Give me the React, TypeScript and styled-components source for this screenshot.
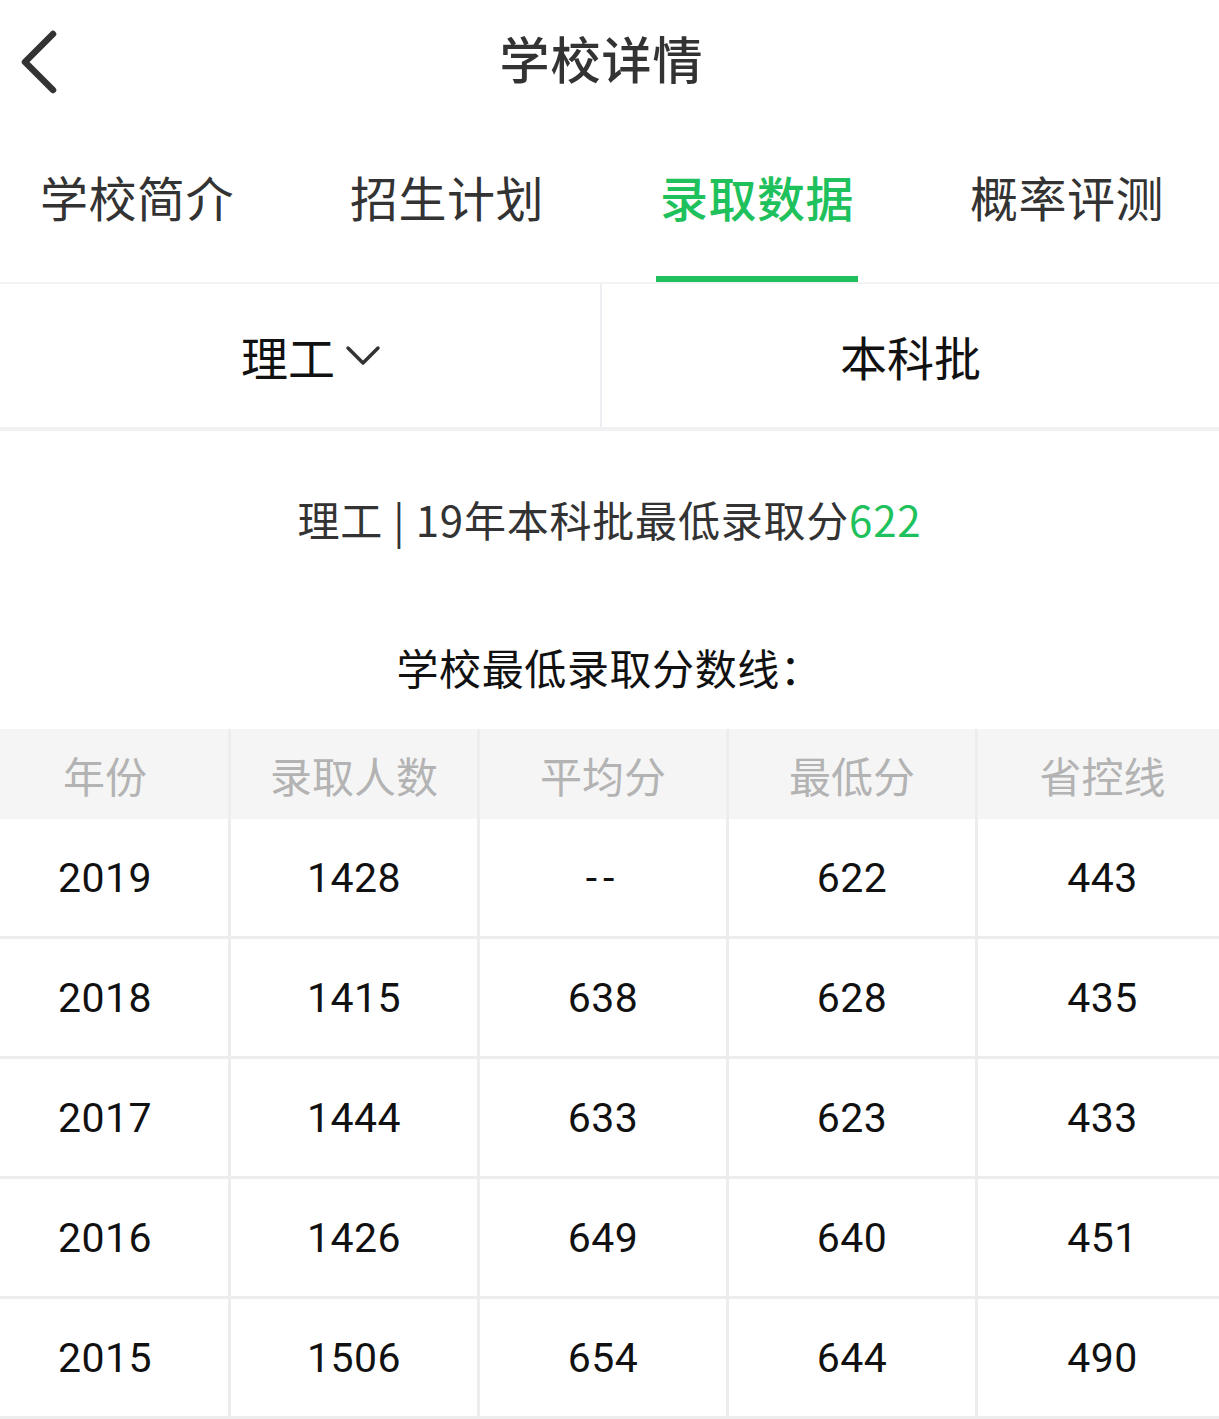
import React from "react";
import styled, { createGlobalStyle } from "styled-components";

const GREEN = "#1ec15c";
const LINE = "#ededed";

const GlobalStyle = createGlobalStyle`
  html, body {
    margin: 0;
    padding: 0;
    background: #ffffff;
    font-family: "Noto Sans CJK SC", "Noto Sans", sans-serif;
    overflow-x: hidden;
  }
`;

const Page = styled.div`
  width: 1219px;
  overflow: hidden;
`;

const Header = styled.header`
  position: relative;
  height: 120px;
  display: flex;
  align-items: center;
  justify-content: center;
  padding-right: 16px;
  box-sizing: border-box;
`;

const BackButton = styled.button`
  position: absolute;
  left: 14px;
  top: 26px;
  width: 50px;
  height: 70px;
  border: 0;
  padding: 0;
  background: none;
  display: flex;
  align-items: center;
  justify-content: center;
`;

const Title = styled.h1`
  margin: 0 0 6px;
  font-size: 50px;
  font-weight: 500;
  color: #333;
  letter-spacing: 1px;
`;

const TabBar = styled.nav`
  height: 162px;
  border-bottom: 2px solid #f2f2f4;
  overflow: hidden;
`;

const TabTrack = styled.div`
  display: grid;
  grid-template-columns: repeat(4, 310px);
  margin-left: -18px;
  height: 100%;
`;

const Tab = styled.div<{ $active?: boolean }>`
  display: flex;
  align-items: center;
  justify-content: center;
  font-size: 48px;
  letter-spacing: 0.5px;
  color: ${(p) => (p.$active ? GREEN : "#333")};
  font-weight: ${(p) => (p.$active ? 500 : 400)};
`;

const TabLabel = styled.span<{ $active?: boolean }>`
  position: relative;
  height: 162px;
  display: flex;
  align-items: center;
  padding-bottom: 10px;
  box-sizing: border-box;
  &::after {
    content: "";
    display: ${(p) => (p.$active ? "block" : "none")};
    position: absolute;
    left: -4px;
    right: -4px;
    bottom: 0;
    height: 6px;
    background: ${GREEN};
  }
`;

const FilterRow = styled.div`
  height: 143px;
  display: grid;
  grid-template-columns: 602px 1fr;
  border-bottom: 4px solid #f1f1f4;
`;

const FilterCell = styled.div<{ $divider?: boolean; $shift?: number }>`
  display: flex;
  align-items: center;
  justify-content: center;
  gap: 10px;
  font-size: 47px;
  color: #111;
  padding-left: ${(p) => p.$shift ?? 0}px;
  border-right: ${(p) => (p.$divider ? "2px solid #eeeef2" : "none")};
`;

const Summary = styled.p`
  margin: 58px 0 0;
  line-height: 60px;
  text-align: center;
  font-size: 42px;
  letter-spacing: 0.8px;
  color: #333;
`;

const Highlight = styled.span`
  color: ${GREEN};
`;

const SectionTitle = styled.h2`
  margin: 88px 0 32px;
  line-height: 60px;
  text-align: center;
  font-size: 42px;
  letter-spacing: 0.6px;
  font-weight: 400;
  color: #111;
`;

const Table = styled.div`
  width: 1245px;
  margin-left: -18px;
  display: grid;
  grid-template-columns: repeat(5, 1fr);
`;

const HeadCell = styled.div<{ $last?: boolean }>`
  height: 90px;
  display: flex;
  align-items: center;
  justify-content: center;
  background: #f5f5f5;
  color: #b3b3b3;
  font-size: 42px;
  border-right: ${(p) => (p.$last ? "none" : `3px solid ${LINE}`)};
`;

const Cell = styled.div<{ $last?: boolean; $wide?: boolean }>`
  height: 117px;
  display: flex;
  align-items: center;
  justify-content: center;
  font-family: Roboto, "Noto Sans", sans-serif;
  font-size: 41px;
  color: #111;
  letter-spacing: ${(p) => (p.$wide ? "6px" : "0.5px")};
  border-right: ${(p) => (p.$last ? "none" : `3px solid ${LINE}`)};
  border-bottom: 3px solid ${LINE};
`;

const tabs = ["学校简介", "招生计划", "录取数据", "概率评测"];
const columns = ["年份", "录取人数", "平均分", "最低分", "省控线"];
const rows = [
  ["2019", "1428", "--", "622", "443"],
  ["2018", "1415", "638", "628", "435"],
  ["2017", "1444", "633", "623", "433"],
  ["2016", "1426", "649", "640", "451"],
  ["2015", "1506", "654", "644", "490"],
];

export default function App() {
  return (
    <>
      <GlobalStyle />
      <Page>
        <Header>
          <BackButton aria-label="返回">
            <svg width="44" height="66" viewBox="0 0 44 66">
              <polyline
                points="36,6 8,34 36,62"
                fill="none"
                stroke="#333"
                strokeWidth="6.5"
                strokeLinecap="round"
                strokeLinejoin="round"
              />
            </svg>
          </BackButton>
          <Title>学校详情</Title>
        </Header>

        <TabBar>
          <TabTrack>
            {tabs.map((t, i) => (
              <Tab key={t} $active={i === 2}>
                <TabLabel $active={i === 2}>{t}</TabLabel>
              </Tab>
            ))}
          </TabTrack>
        </TabBar>

        <FilterRow>
          <FilterCell $divider $shift={22}>
            <span>理工</span>
            <svg width="36" height="24" viewBox="0 0 36 24">
              <polyline
                points="3,4 18,19 33,4"
                fill="none"
                stroke="#333"
                strokeWidth="3.5"
                strokeLinecap="round"
                strokeLinejoin="round"
              />
            </svg>
          </FilterCell>
          <FilterCell>本科批</FilterCell>
        </FilterRow>

        <Summary>
          理工 | 19年本科批最低录取分<Highlight>622</Highlight>
        </Summary>

        <SectionTitle>学校最低录取分数线：</SectionTitle>

        <Table>
          {columns.map((c, i) => (
            <HeadCell key={c} $last={i === columns.length - 1}>
              {c}
            </HeadCell>
          ))}
          {rows.map((r) =>
            r.map((v, i) => (
              <Cell
                key={r[0] + i}
                $last={i === r.length - 1}
                $wide={v === "--"}
              >
                {v}
              </Cell>
            ))
          )}
        </Table>
      </Page>
    </>
  );
}
